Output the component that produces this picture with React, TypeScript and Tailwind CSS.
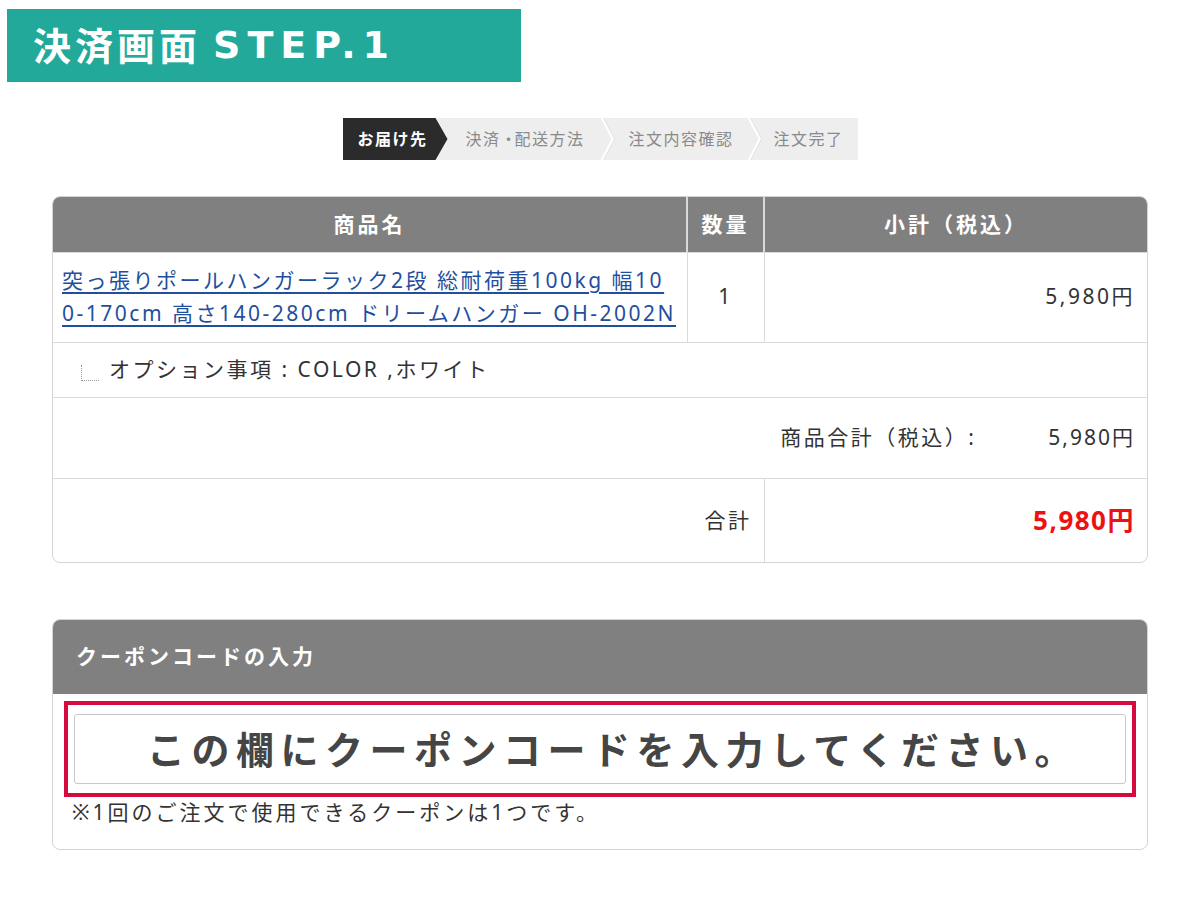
import React from 'react';

const font = "font-['Noto_Sans','Noto_Sans_CJK_JP',sans-serif]";

function Breadcrumb() {
  return (
    <div className="flex justify-center pt-[36px]">
      <div className="flex h-[42px] w-[515px] items-center bg-[#eeeeee] text-[16px] tracking-[1.5px]">
        <div className="flex h-full w-[105px] items-center bg-[#2b2b2b] pl-[15px] font-bold text-white [clip-path:polygon(0_0,93px_0,105px_50%,93px_100%,0_100%)]">
          お届け先
        </div>
        <div className="flex h-full items-center pl-[18px] text-[#8a8a8a]">
          決済<span className="tracking-[-2px]">・</span>配送方法
        </div>
        <Chevron className="ml-[16px]" />
        <div className="flex h-full items-center pl-[14px] text-[#8a8a8a]">注文内容確認</div>
        <Chevron className="ml-[14px]" />
        <div className="flex h-full items-center pl-[12px] text-[#8a8a8a]">注文完了</div>
      </div>
    </div>
  );
}

function Chevron({ className }: { className?: string }) {
  return (
    <svg width="14" height="42" viewBox="0 0 14 42" className={className}>
      <polyline points="1,0 12,21 1,42" fill="none" stroke="#ffffff" strokeWidth="2.5" />
      <polyline points="2.5,0 13.5,21 2.5,42" fill="none" stroke="#dcdcdc" strokeWidth="0.8" />
    </svg>
  );
}

function OrderTable() {
  return (
    <div className="mx-[52px] mt-[36px] overflow-hidden rounded-[8px] border border-[#d4d4d4] text-[21px] tracking-[2.5px] text-[#333]">
      <table className="w-full border-collapse border-hidden">
        <colgroup>
          <col className="w-[634px]" />
          <col className="w-[77px]" />
          <col />
        </colgroup>
        <thead>
          <tr className="h-[55px] bg-[#808080] tracking-[3px] text-white">
            <th className="border-r-2 border-[#d9d9d9] font-bold">商品名</th>
            <th className="border-r-2 border-[#d9d9d9] font-bold">数量</th>
            <th className="font-bold">小計（税込）</th>
          </tr>
        </thead>
        <tbody>
          <tr className="h-[90px]">
            <td className="whitespace-nowrap border border-[#dadada] pl-[9px] pr-[4px] leading-[33px]">
              <a href="#" className="text-[#1f4f9e] underline underline-offset-[4px]">
                突っ張りポールハンガーラック2段 総耐荷重100kg 幅10
                <br />
                0-170cm 高さ140-280cm ドリームハンガー OH-2002N
              </a>
            </td>
            <td className="border border-[#dadada] text-center">1</td>
            <td className="border border-[#dadada] pr-[12px] text-right">5,980円</td>
          </tr>
          <tr className="h-[55px]">
            <td colSpan={3} className="border border-[#dadada] pl-[28px]">
              <div className="flex items-center">
                <span className="mr-[10px] mt-[6px] inline-block h-[16px] w-[18px] border-b border-l border-dotted border-[#9a9a9a]" />
                オプション事項 : COLOR ,ホワイト
              </div>
            </td>
          </tr>
          <tr className="h-[81px]">
            <td colSpan={3} className="border border-[#dadada] pr-[12px]">
              <div className="flex items-center justify-end gap-[72px]">
                <span>商品合計（税込）:</span>
                <span className="tracking-[2px]">5,980円</span>
              </div>
            </td>
          </tr>
          <tr className="h-[84px]">
            <td colSpan={2} className="border border-[#dadada] pr-[12px] text-right">合計</td>
            <td className="border border-[#dadada] pr-[12px] text-right text-[26px] font-bold tracking-[1.5px] text-[#ee1111]">
              5,980円
            </td>
          </tr>
        </tbody>
      </table>
    </div>
  );
}

function Coupon() {
  return (
    <div className="mx-[52px] mt-[56px] overflow-hidden rounded-[8px] border border-[#d4d4d4]">
      <div className="flex h-[74px] items-center bg-[#808080] pl-[23px] text-[21px] font-bold tracking-[3px] text-white">
        クーポンコードの入力
      </div>
      <div className="mx-[11px] mt-[7px] border-[4px] border-[#d40b3c] px-[6px] py-[9px]">
        <div className="flex h-[70px] items-center justify-center rounded-[3px] border border-[#c8c8c8] bg-white pl-[26px] text-[38px] font-bold tracking-[6.5px] text-[#454545]">
          この欄にクーポンコードを入力してください。
        </div>
      </div>
      <p className="pb-[20px] pl-[19px] pt-0 text-[21px] tracking-[3px] text-[#333]">
        ※1回のご注文で使用できるクーポンは1つです。
      </p>
    </div>
  );
}

export default function App() {
  return (
    <div className={`min-h-[915px] w-[1200px] bg-white ${font}`}>
      <div className="pl-[7px] pt-[9px]">
        <div className="flex h-[73px] w-[514px] items-center bg-[#22a99a] pl-[26px] text-[38px] font-bold tracking-[4px] text-white">
          決済画面
          <span className="ml-[12px] font-['DejaVu_Sans',sans-serif] tracking-[7px]">STEP.1</span>
        </div>
      </div>
      <Breadcrumb />
      <OrderTable />
      <Coupon />
    </div>
  );
}
